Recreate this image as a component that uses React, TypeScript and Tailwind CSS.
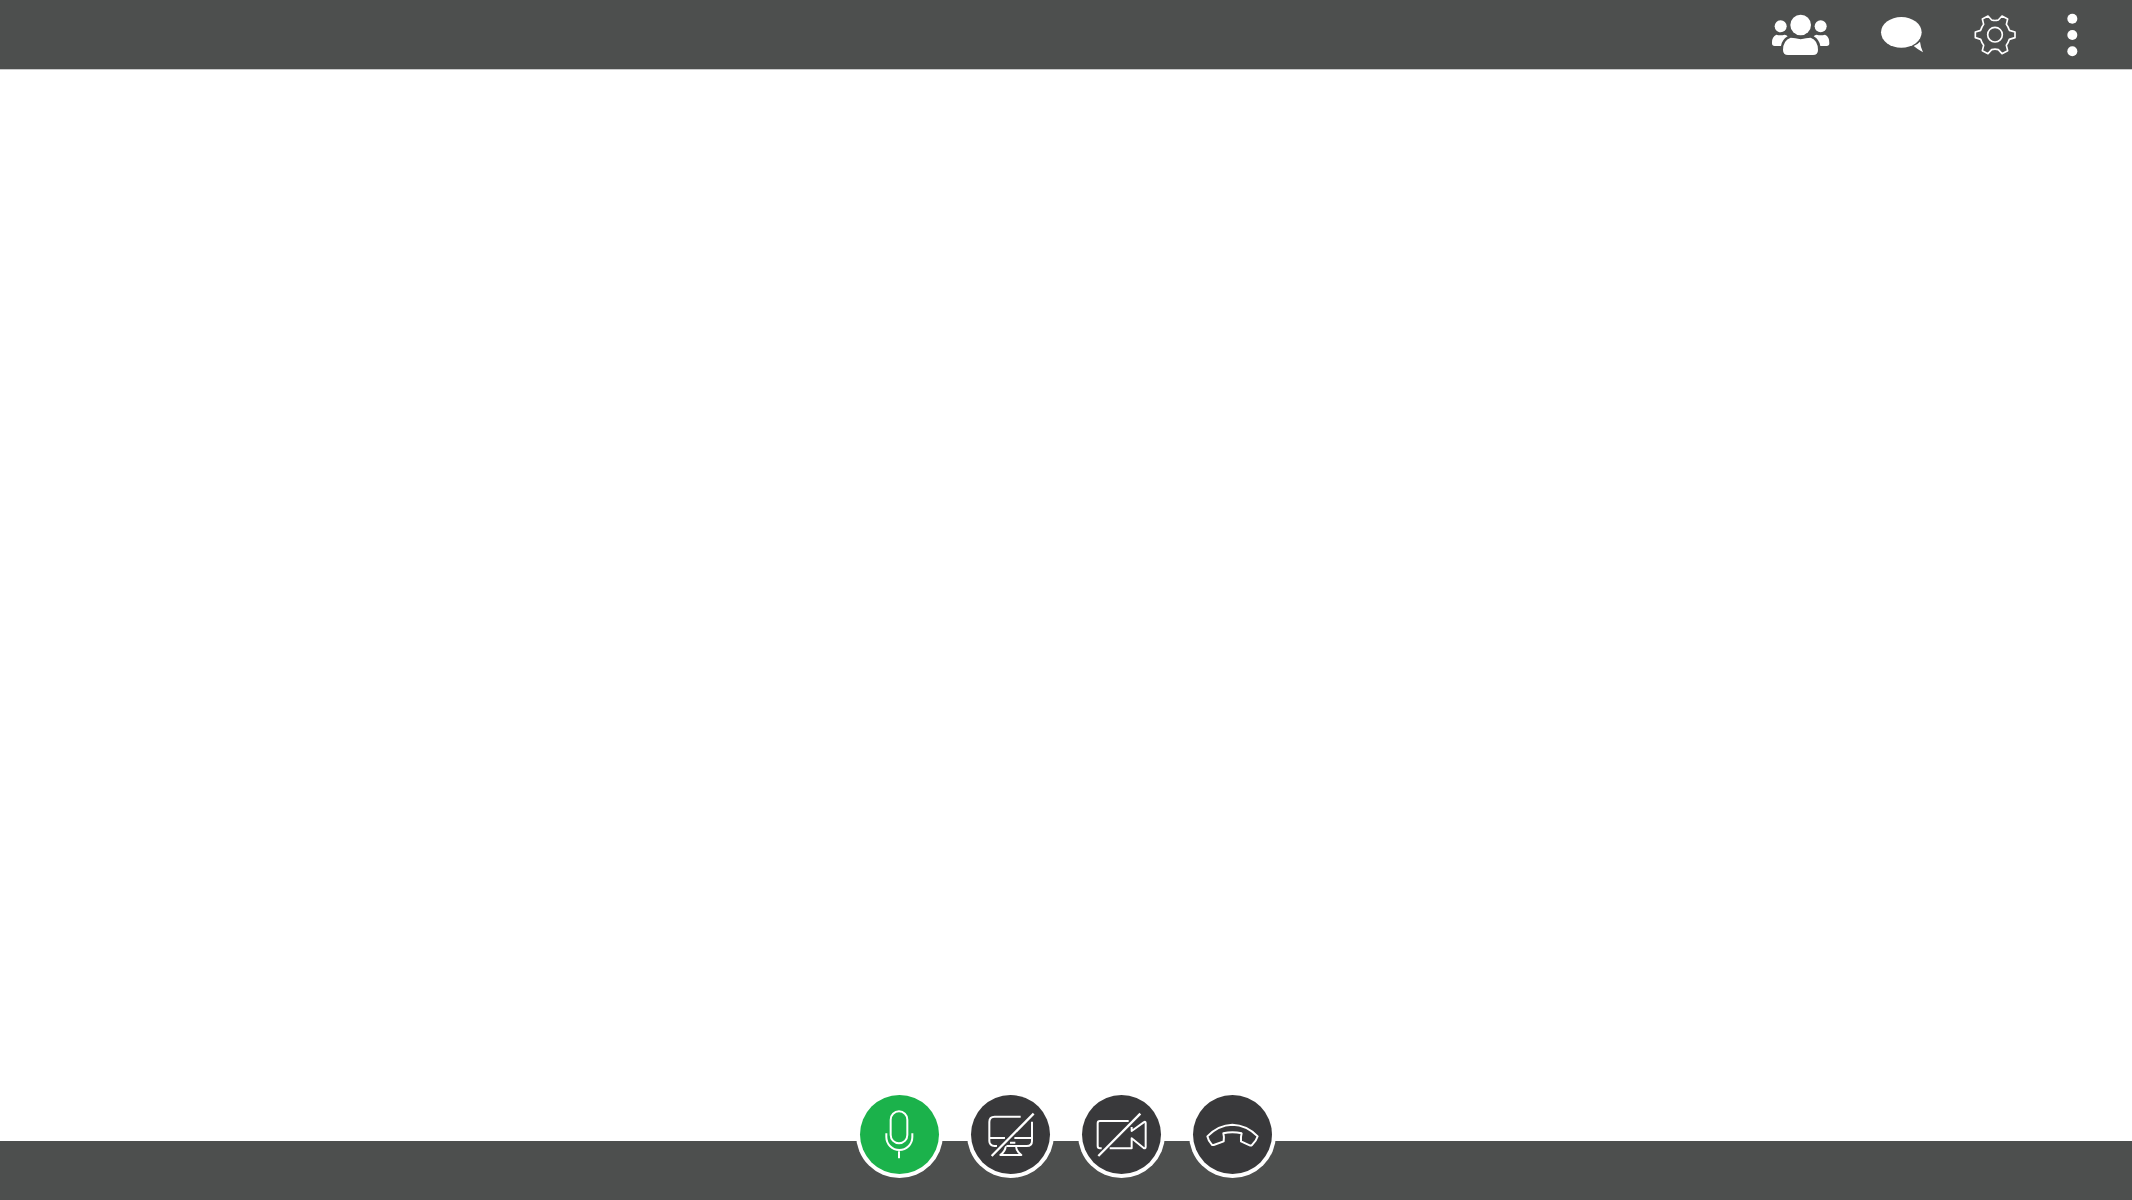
import type { ReactNode } from "react";

type IconProps = { viewBox: string; className: string; children: ReactNode };

function Icon({ viewBox, className, children }: IconProps) {
  return (
    <svg viewBox={viewBox} className={className} aria-hidden="true">
      {children}
    </svg>
  );
}

const stroke = {
  fill: "none",
  stroke: "#fff",
  strokeWidth: 6,
  strokeLinejoin: "round" as const,
};

function HeaderButton({ label, children }: { label: string; children: ReactNode }) {
  return (
    <button type="button" aria-label={label} className="cursor-pointer">
      {children}
    </button>
  );
}

function CallButton({
  label,
  active = false,
  children,
}: {
  label: string;
  active?: boolean;
  children: ReactNode;
}) {
  return (
    <button
      type="button"
      aria-label={label}
      aria-pressed={active}
      className={`size-[87px] cursor-pointer rounded-full bg-white p-1 ${active ? "text-[#1bb24b]" : "text-[#39393b]"}`}
    >
      <span className="block size-full rounded-full bg-current">{children}</span>
    </button>
  );
}

export default function App() {
  return (
    <div className="flex min-h-screen flex-col bg-white">
      <header className="flex h-[70px] items-start justify-end gap-[49px] border-b border-[#c9caca] bg-[#4d4f4e] pr-[52px]">
        <HeaderButton label="Participants">
          <Icon viewBox="33 0 180 207" className="h-[69px] w-[60px]">
            <g fill="#fff">
              <circle cx="122" cy="75" r="31" />
              <circle cx="62" cy="79" r="18" />
              <circle cx="182" cy="79" r="18" />
              <path d="M92 113 Q100 113 106 115 Q122 120 138 115 Q144 113 152 113 Q174 121 174 150 Q174 165 159 165 H84 Q69 165 69 150 Q69 121 92 113Z" />
              <path d="M49 104 Q62 108 74 104 Q79 105 83 109 Q66 119 63 138 H44 Q36 138 36 130 Q35 110 49 104Z" />
              <path d="M195 104 Q182 108 170 104 Q165 105 161 109 Q178 119 181 138 H200 Q208 138 208 130 Q209 110 195 104Z" />
            </g>
          </Icon>
        </HeaderButton>
        <HeaderButton label="Chat">
          <Icon viewBox="30 0 132 207" className="h-[69px] w-[44px]">
            <g fill="#fff">
              <ellipse cx="94" cy="97" rx="61" ry="46" />
              <path d="M131 138 Q142 134 150 125 Q152 143 159 157 Q144 149 131 138Z" />
            </g>
          </Icon>
        </HeaderButton>
        <HeaderButton label="Settings">
          <Icon viewBox="39 0 132 207" className="h-[69px] w-[44px]">
            <g {...stroke} strokeWidth="5">
              <circle cx="105" cy="104" r="22" />
              <path d="M84 48 L95 60 Q105 63 115 60 L126 48 L143 57 L139 73 Q145 81 148 91 L165 96 V113 L148 118 Q145 128 139 136 L143 152 L126 161 L115 149 Q105 146 95 149 L84 161 L67 152 L71 136 Q65 128 62 118 L46 113 V96 L62 91 Q65 81 71 73 L67 57Z" />
            </g>
          </Icon>
        </HeaderButton>
        <HeaderButton label="More options">
          <Icon viewBox="78 0 42 207" className="h-[69px] w-[14px]">
            <g fill="#fff">
              <circle cx="97" cy="56" r="15" />
              <circle cx="97" cy="105" r="15" />
              <circle cx="97" cy="154" r="15" />
            </g>
          </Icon>
        </HeaderButton>
      </header>

      <main className="flex-1" />

      <footer className="flex h-[59px] items-start justify-center bg-[#4d4f4e]">
        <div className="-mt-[50px] flex gap-6">
          <CallButton label="Microphone" active>
            <Icon viewBox="30 29 237 237" className="size-full">
              <g {...stroke}>
                <rect x="122" y="78" width="50" height="96" rx="25" />
                <path d="M109 144 V155 A39 39 0 0 0 187 155 V144 M147 198 V219" />
              </g>
            </Icon>
          </CallButton>
          <CallButton label="Share screen">
            <Icon viewBox="33 29 237 237" className="size-full">
              <g {...stroke}>
                <path d="M182 94 H104 Q88 94 88 110 V167 Q88 181 104 182 L111 182" />
                <path d="M216 109 V167 Q216 182 200 182 H139 M88 158 H135 M163 158 H216 M150 172 H166" />
                <path d="M137 182 Q137 197 121 209 H184 Q168 197 168 182" />
              </g>
              <path d="M95 212 L221 85" stroke="#39393b" strokeWidth="17" />
              <path d="M95 212 L221 85" stroke="#fff" strokeWidth="7" />
            </Icon>
          </CallButton>
          <CallButton label="Camera">
            <Icon viewBox="36 29 237 237" className="size-full">
              <g {...stroke}>
                <path d="M176 107 H90 Q83 107 83 114 V182 Q83 189 90 189 H95" />
                <path d="M119 189 H185 V159 L221 188 Q227 191 227 184 V114 Q227 107 221 111 L185 137 V125" />
              </g>
              <path d="M85 212 L211 85" stroke="#fff" strokeWidth="7" />
            </Icon>
          </CallButton>
          <CallButton label="Hang up">
            <Icon viewBox="39 29 237 237" className="size-full">
              <g {...stroke}>
                <path d="M82 153 Q115 119 157 118 Q200 119 233 153 Q229 167 216 179 Q213 182 209 180 L183 168 Q182 154 185 144 Q157 137 130 144 Q133 154 131 168 L101 179 Q97 180 95 177 Q85 167 82 153Z" />
              </g>
            </Icon>
          </CallButton>
        </div>
      </footer>
    </div>
  );
}
